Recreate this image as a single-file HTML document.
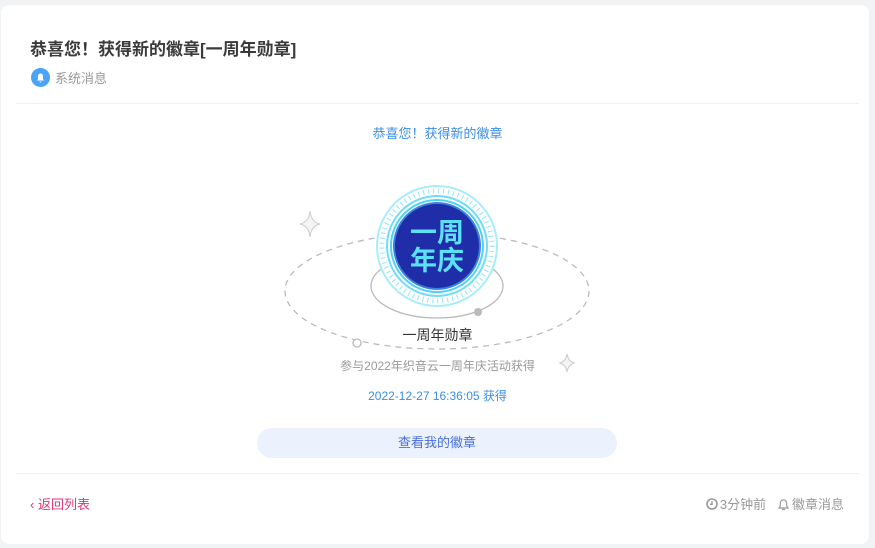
<!DOCTYPE html>
<html><head><meta charset="utf-8"><style>
body{margin:0;width:875px;height:548px;background:#f2f3f5;font-family:"Liberation Sans","Noto Sans CJK SC",sans-serif;overflow:hidden;position:relative}
.card{position:absolute;left:1px;top:5px;width:868px;height:539px;background:#fff;border-radius:8px}
.t{position:absolute;left:30px;top:35px;font-size:17px;font-weight:bold;color:#3a3a3a}
.sub{position:absolute;left:31px;top:68px;font-size:13px;color:#999;display:flex;align-items:center}
.sub i{width:19px;height:19px;border-radius:50%;background:#4aa3f5;margin-right:5px;display:inline-block;position:relative}
.hr{position:absolute;left:16px;right:16px;height:1px;background:#f0f0f0}
.c{position:absolute;left:0;width:875px;text-align:center}
.btn{position:absolute;left:257px;top:428px;width:360px;height:30px;border-radius:15px;background:#ebf1fd;color:#4a6fd8;font-size:13px;text-align:center;line-height:30px}
</style></head><body>
<div class="card"></div>
<div class="t">恭喜您！获得新的徽章[一周年勋章]</div>
<div class="sub"><i><svg width="19" height="19" viewBox="0 0 19 19"><path d="M6 12.5h7l-1-1.5v-3a2.5 2.5 0 0 0-5 0v3z M8.5 13.5h2a1 1 0 0 1-2 0z" fill="#fff"/></svg></i>系统消息</div>
<div class="hr" style="top:103px"></div>
<div class="c" style="top:123px;font-size:13px;color:#3a8ee6">恭喜您！获得新的徽章</div>
<svg style="position:absolute;left:0;top:0" width="875" height="548">
<ellipse cx="437" cy="291" rx="152" ry="58" fill="none" stroke="#bbb" stroke-width="1.3" stroke-dasharray="6 5"/>
<ellipse cx="437" cy="286" rx="66" ry="32" fill="none" stroke="#bbb" stroke-width="1.3"/>
<circle cx="478" cy="312" r="4" fill="#bbb"/>
<circle cx="357" cy="343" r="4" fill="#fff" stroke="#bbb" stroke-width="1.3"/>
<path d="M310 211 Q311 222 320 224 Q311 226 310 237 Q309 226 300 224 Q309 222 310 211Z" fill="#f4f4f4" stroke="#ccc"/>
<path d="M567 354 Q568 361 574 363 Q568 365 567 372 Q566 365 560 363 Q566 361 567 354Z" fill="#f4f4f4" stroke="#ccc"/>
<circle cx="437" cy="246" r="60" fill="#fff" stroke="#a8ecfb" stroke-width="2"/>
<circle cx="437" cy="246" r="55" fill="none" stroke="#8fe6fb" stroke-width="5" stroke-dasharray="1 4"/>
<circle cx="437" cy="246" r="50" fill="none" stroke="#6fdcf8" stroke-width="2"/>
<circle cx="437" cy="246" r="46" fill="none" stroke="#4cd3f3" stroke-width="2"/>
<circle cx="437" cy="246" r="43" fill="#1f2ea8" stroke="#3b7fe0" stroke-width="2"/>
<text x="437" y="242" text-anchor="middle" font-size="27" font-weight="bold" fill="#5ce0f5" font-family="Noto Sans CJK SC,sans-serif">一周</text>
<text x="437" y="270" text-anchor="middle" font-size="27" font-weight="bold" fill="#5ce0f5" font-family="Noto Sans CJK SC,sans-serif">年庆</text>
</svg>
<div class="c" style="top:325px;font-size:14px;color:#333">一周年勋章</div>
<div class="c" style="top:357px;font-size:12px;color:#999">参与2022年织音云一周年庆活动获得</div>
<div class="c" style="top:387px;font-size:12px;color:#3a8ee6">2022-12-27 16:36:05 获得</div>
<div class="btn">查看我的徽章</div>
<div class="hr" style="top:473px"></div>
<div style="position:absolute;left:30px;top:494px;font-size:13px;color:#e0337a">‹ 返回列表</div>
<div style="position:absolute;right:31px;top:494px;font-size:13px;color:#999">
<svg width="12" height="12" viewBox="0 0 12 12" style="vertical-align:-1px;margin-right:2px"><circle cx="6" cy="6" r="5" fill="none" stroke="#999" stroke-width="1.6"/><path d="M6 3v3.3h-2" fill="none" stroke="#999" stroke-width="1.4"/></svg>3分钟前&nbsp;&nbsp;
<svg width="13" height="14" viewBox="0 0 13 14" style="vertical-align:-2px;margin-right:2px"><path d="M2 11h9l-1.3-2V6a3.2 3.2 0 0 0-6.4 0v3z M5 12.5h3" fill="none" stroke="#999" stroke-width="1.2"/></svg>徽章消息</div>
</body></html>
